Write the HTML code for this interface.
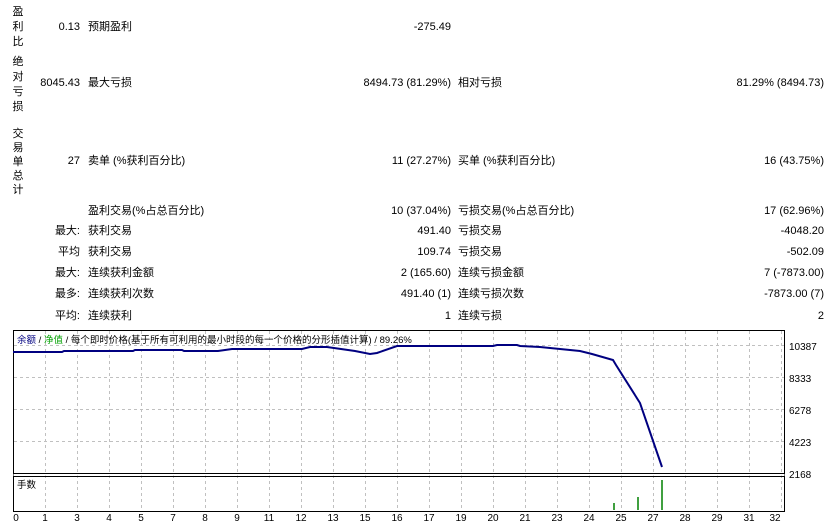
<!DOCTYPE html>
<html><head><meta charset="utf-8"><style>
body{margin:0;width:836px;height:524px;background:#fff;position:relative;overflow:hidden;font-family:"Liberation Sans","Noto Sans CJK SC",sans-serif;font-size:11px;color:#000}
.t{position:absolute;white-space:nowrap;line-height:14px}
.r{text-align:right}
.v{position:absolute;left:8px;width:20px;text-align:center;line-height:15px;font-size:11px}
</style></head><body>
<div class="v" style="top:5px">盈<br>利<br>比</div>
<div class="v" style="top:55px">绝<br>对<br>亏<br>损</div>
<div class="v" style="top:127px;line-height:14px">交<br>易<br>单<br>总<br>计</div>

<div class="t r" style="right:756px;top:20px">0.13</div><div class="t" style="left:88px;top:20px">预期盈利</div><div class="t r" style="right:385px;top:20px">-275.49</div>
<div class="t r" style="right:756px;top:76px">8045.43</div><div class="t" style="left:88px;top:76px">最大亏损</div><div class="t r" style="right:385px;top:76px">8494.73 (81.29%)</div><div class="t" style="left:458px;top:76px">相对亏损</div><div class="t r" style="right:12px;top:76px">81.29% (8494.73)</div>
<div class="t r" style="right:756px;top:154px">27</div><div class="t" style="left:88px;top:154px">卖单 (%获利百分比)</div><div class="t r" style="right:385px;top:154px">11 (27.27%)</div><div class="t" style="left:458px;top:154px">买单 (%获利百分比)</div><div class="t r" style="right:12px;top:154px">16 (43.75%)</div>

<div class="t" style="left:88px;top:204px">盈利交易(%占总百分比)</div><div class="t r" style="right:385px;top:204px">10 (37.04%)</div><div class="t" style="left:458px;top:204px">亏损交易(%占总百分比)</div><div class="t r" style="right:12px;top:204px">17 (62.96%)</div>
<div class="t r" style="right:756px;top:224px">最大:</div><div class="t" style="left:88px;top:224px">获利交易</div><div class="t r" style="right:385px;top:224px">491.40</div><div class="t" style="left:458px;top:224px">亏损交易</div><div class="t r" style="right:12px;top:224px">-4048.20</div>
<div class="t r" style="right:756px;top:245px">平均</div><div class="t" style="left:88px;top:245px">获利交易</div><div class="t r" style="right:385px;top:245px">109.74</div><div class="t" style="left:458px;top:245px">亏损交易</div><div class="t r" style="right:12px;top:245px">-502.09</div>
<div class="t r" style="right:756px;top:266px">最大:</div><div class="t" style="left:88px;top:266px">连续获利金额</div><div class="t r" style="right:385px;top:266px">2 (165.60)</div><div class="t" style="left:458px;top:266px">连续亏损金额</div><div class="t r" style="right:12px;top:266px">7 (-7873.00)</div>
<div class="t r" style="right:756px;top:287px">最多:</div><div class="t" style="left:88px;top:287px">连续获利次数</div><div class="t r" style="right:385px;top:287px">491.40 (1)</div><div class="t" style="left:458px;top:287px">连续亏损次数</div><div class="t r" style="right:12px;top:287px">-7873.00 (7)</div>
<div class="t r" style="right:756px;top:309px">平均:</div><div class="t" style="left:88px;top:309px">连续获利</div><div class="t r" style="right:385px;top:309px">1</div><div class="t" style="left:458px;top:309px">连续亏损</div><div class="t r" style="right:12px;top:309px">2</div>

<svg style="position:absolute;left:0;top:0" width="836" height="524">
<g stroke="#c0c0c0" stroke-dasharray="3,3" stroke-width="1">
<line x1="14" y1="377.5" x2="784" y2="377.5"/><line x1="14" y1="409.5" x2="784" y2="409.5"/><line x1="14" y1="441.5" x2="784" y2="441.5"/><line x1="14" y1="345.5" x2="784" y2="345.5"/>
<line x1="45.5" y1="331" x2="45.5" y2="511"/><line x1="77.5" y1="331" x2="77.5" y2="511"/><line x1="109.5" y1="331" x2="109.5" y2="511"/><line x1="141.5" y1="331" x2="141.5" y2="511"/><line x1="173.5" y1="331" x2="173.5" y2="511"/><line x1="205.5" y1="331" x2="205.5" y2="511"/><line x1="237.5" y1="331" x2="237.5" y2="511"/><line x1="269.5" y1="331" x2="269.5" y2="511"/><line x1="301.5" y1="331" x2="301.5" y2="511"/><line x1="333.5" y1="331" x2="333.5" y2="511"/><line x1="365.5" y1="331" x2="365.5" y2="511"/><line x1="397.5" y1="331" x2="397.5" y2="511"/><line x1="429.5" y1="331" x2="429.5" y2="511"/><line x1="461.5" y1="331" x2="461.5" y2="511"/><line x1="493.5" y1="331" x2="493.5" y2="511"/><line x1="525.5" y1="331" x2="525.5" y2="511"/><line x1="557.5" y1="331" x2="557.5" y2="511"/><line x1="589.5" y1="331" x2="589.5" y2="511"/><line x1="621.5" y1="331" x2="621.5" y2="511"/><line x1="653.5" y1="331" x2="653.5" y2="511"/><line x1="685.5" y1="331" x2="685.5" y2="511"/><line x1="717.5" y1="331" x2="717.5" y2="511"/><line x1="749.5" y1="331" x2="749.5" y2="511"/><line x1="781.5" y1="331" x2="781.5" y2="511"/>
</g>
<rect x="13.5" y="330.5" width="771" height="181" fill="none" stroke="#000"/>
<rect x="13" y="474.5" width="772" height="1" fill="#fff"/>
<line x1="13" y1="473.5" x2="785" y2="473.5" stroke="#000"/><line x1="13" y1="476.5" x2="785" y2="476.5" stroke="#000"/>
<polyline fill="none" stroke="#000080" stroke-width="2" points="13,352 62,352 64,351 133,351 135,350 182,350 184,351 218,351 232,349 302,349 310,347 327,347 355,351 370,354 377,353 397,346 493,346 497,345 517,345 520,346 540,347 560,349 580,351 592,354 613,360 616,365 640,403 662,467"/>
<g stroke="#008000" stroke-width="1.5"><line x1="614" y1="503" x2="614" y2="510"/><line x1="638" y1="497" x2="638" y2="510"/><line x1="662" y1="480" x2="662" y2="510"/></g>
<g font-family="Liberation Sans,sans-serif" font-size="10" fill="#000">
<text x="789" y="350">10387</text><text x="789" y="382">8333</text><text x="789" y="414">6278</text><text x="789" y="446">4223</text><text x="789" y="478">2168</text>
</g>
<g font-family="Liberation Sans,sans-serif" font-size="10" fill="#000" text-anchor="middle">
<text x="16" y="521">0</text><text x="45" y="521">1</text><text x="77" y="521">3</text><text x="109" y="521">4</text><text x="141" y="521">5</text><text x="173" y="521">7</text><text x="205" y="521">8</text><text x="237" y="521">9</text><text x="269" y="521">11</text><text x="301" y="521">12</text><text x="333" y="521">13</text><text x="365" y="521">15</text><text x="397" y="521">16</text><text x="429" y="521">17</text><text x="461" y="521">19</text><text x="493" y="521">20</text><text x="525" y="521">21</text><text x="557" y="521">23</text><text x="589" y="521">24</text><text x="621" y="521">25</text><text x="653" y="521">27</text><text x="685" y="521">28</text><text x="717" y="521">29</text><text x="749" y="521">31</text><text x="775" y="521">32</text>
</g>
<text x="17" y="343" font-family="Liberation Sans,Noto Sans CJK SC,sans-serif" font-size="9.5"><tspan fill="#000080">余额</tspan><tspan fill="#000"> / </tspan><tspan fill="#00a000">净值</tspan><tspan fill="#000"> / 每个即时价格(基于所有可利用的最小时段的每一个价格的分形插值计算) / 89.26%</tspan></text>
<text x="17" y="488" font-family="Liberation Sans,Noto Sans CJK SC,sans-serif" font-size="9.5">手数</text>
</svg>
</body></html>
